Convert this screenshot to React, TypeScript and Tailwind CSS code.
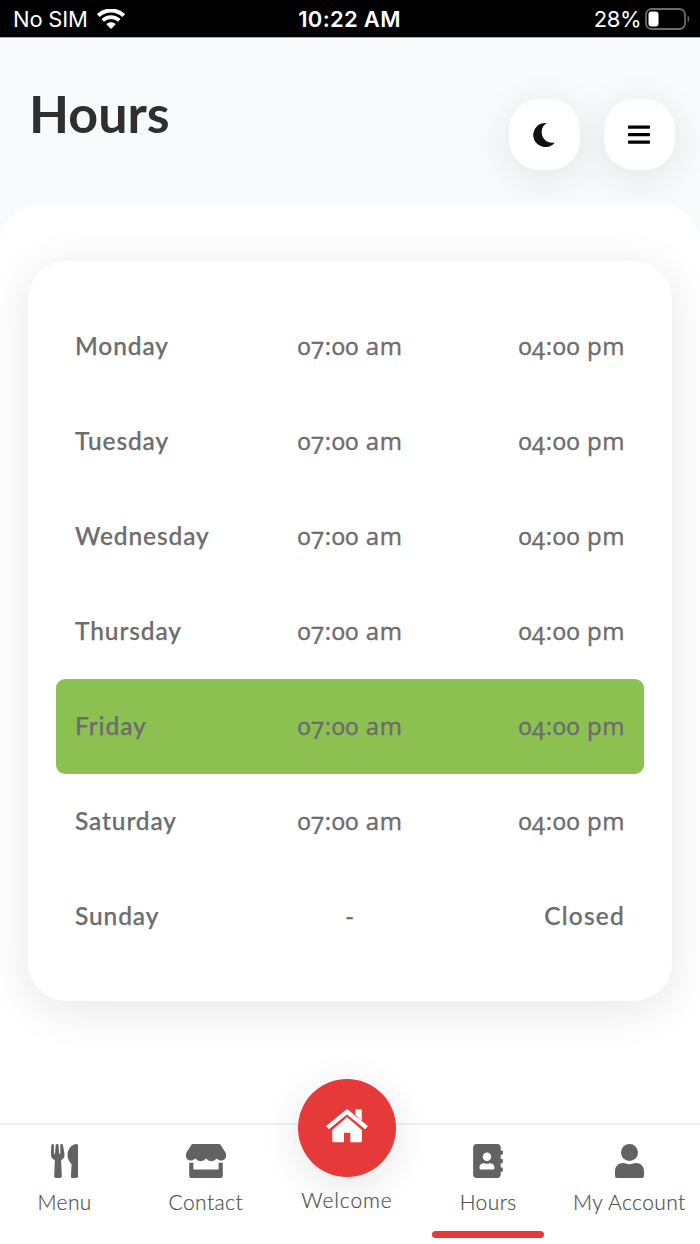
import clsx from 'clsx'
import type { ReactNode } from 'react'
import { FaAddressBook } from 'react-icons/fa'

interface DayHours {
  day: string
  open: string
  close: string
  today?: boolean
}

const HOURS: DayHours[] = [
  { day: 'Monday', open: '07:00 am', close: '04:00 pm' },
  { day: 'Tuesday', open: '07:00 am', close: '04:00 pm' },
  { day: 'Wednesday', open: '07:00 am', close: '04:00 pm' },
  { day: 'Thursday', open: '07:00 am', close: '04:00 pm' },
  { day: 'Friday', open: '07:00 am', close: '04:00 pm', today: true },
  { day: 'Saturday', open: '07:00 am', close: '04:00 pm' },
  { day: 'Sunday', open: '-', close: 'Closed' },
]

function UtensilsIcon() {
  return (
    <svg className="h-[34px] w-[27px]" viewBox="0 0 27 34" fill="#626262">
      <path d="M.5.8C.7-.2 2.800-.2 2.900.9V9.500c.1.600 1 .600 1.100 0L4.700.8c.2-1 2.700-1 2.800 0l.7 8.700c.1.600 1 .600 1.100 0V.9c.1-1.100 2.300-1.100 2.500-.1C12 2 13.500 8.500 13.500 11c0 2.300-1.300 4.200-3.400 5.100l.7 15.900A1.900 1.900 0 0 1 8.900 34H5.100a1.900 1.900 0 0 1-1.900-2l.7-15.900C1.500 15.200 0 13.300 0 11 0 8.500.3 2 .5.8Z" />
      <path d="M20.600 20C18.500 18.300 16.500 15 16.500 11 16.500 5 21 0 25.300 0A1.600 1.600 0 0 1 27 1.600V32.200A1.700 1.700 0 0 1 25.300 34H21.600A1.700 1.700 0 0 1 19.900 32.100Z" />
    </svg>
  )
}

function StoreIcon() {
  return (
    <svg className="h-[34px] w-[40px]" viewBox="0 0 40 34" fill="#626262">
      <path d="M7 0h26a2 2 0 0 1 1.700 1l4.600 7.300c2.200 3.600.3 8-4 8.300-1.900 0-3.400-.8-4.700-2.100a6.600 6.600 0 0 1-10.600 0 6.600 6.600 0 0 1-10.600 0C8 15.800 6.600 16.600 4.700 16.600.4 16.300-1.500 11.900.7 8.300L5.300 1A2 2 0 0 1 7 0Z" />
      <path d="M3.200 18.700h4.200V25.500h25.200V18.700h4.200V32a2 2 0 0 1-2 2H5.200a2 2 0 0 1-2-2Z" />
    </svg>
  )
}

function HomeIcon() {
  return (
    <svg className="mb-[4px] h-[34px] w-[42px]" viewBox="0 0 42 34" fill="white">
      <path d="M29.500 6V1.300A1 1 0 0 1 30.500.3H34.800A1 1 0 0 1 35.800 1.300V11.700Z" />
      <path d="M1.500 18.600 21 2.600 40.500 18.600" fill="none" stroke="white" strokeWidth="4.400" strokeLinejoin="round" />
      <path d="M21 8.300 36 21V32A1.300 1.300 0 0 1 34.700 33.300H24.300V23.700H18V33.300H7.600A1.300 1.300 0 0 1 6.300 32V21Z" />
    </svg>
  )
}

function UserIcon() {
  return (
    <svg className="h-[34px] w-[29px]" viewBox="0 0 29 34" fill="#626262">
      <circle cx="14.500" cy="8.500" r="8.500" />
      <path d="M8 19C10.500 19 11.500 20.200 14.500 20.200S18.500 19 21 19C25.500 19 29 22.500 29 27V31.800A2.200 2.200 0 0 1 26.800 34H2.200A2.200 2.200 0 0 1 0 31.800V27C0 22.500 3.500 19 8 19Z" />
    </svg>
  )
}

function StatusBar() {
  return (
    <div className="grid h-[37px] grid-cols-3 items-center bg-black pl-[13px] pr-[10px] pt-[2px] font-['Inter',sans-serif] text-[22px] text-white">
      <div className="flex items-center gap-[9px] whitespace-nowrap">
        <span className="tracking-[-0.2px]">No SIM</span>
        <svg className="h-[21px] w-[28px]" viewBox="0 0 28 21" fill="none">
          <path d="M1.3 6.6C8.4-.2 19.6-.2 26.7 6.6" stroke="white" strokeWidth="4" />
          <path d="M5.7 11.4c4.7-4.4 11.9-4.4 16.6 0" stroke="white" strokeWidth="3.6" />
          <path d="M9.3 15.2c2.7-2.5 6.7-2.5 9.4 0L14 20z" fill="white" />
        </svg>
      </div>
      <span className="-ml-[4px] text-center font-semibold tracking-[0.3px]">10:22 AM</span>
      <div className="flex items-center justify-end gap-[4px]">
        <span className="tracking-[-0.5px]">28%</span>
        <svg className="-mt-[2px] h-[22px] w-[45px]" viewBox="0 0 45 22" fill="none">
          <rect x="1" y="1" width="39" height="20" rx="5.5" stroke="#6b6b6b" strokeWidth="1.8" />
          <rect x="3.5" y="3.5" width="10" height="15" rx="3" fill="white" />
          <path d="M42.6 7.5c2 1.3 2 5.7 0 7z" fill="#6b6b6b" />
        </svg>
      </div>
    </div>
  )
}

function RoundButton({ label, children }: { label: string; children: ReactNode }) {
  return (
    <button
      type="button"
      aria-label={label}
      className="flex size-[71px] items-center justify-center rounded-[30px] bg-white pr-[2px] shadow-[0_8px_40px_rgba(0,0,0,0.09)]"
    >
      {children}
    </button>
  )
}

function HoursRow({ day, open, close, today }: DayHours) {
  const wordClass = 'pt-[2px] text-[24.5px] [-webkit-text-stroke:0.25px_#6c6c6c]'
  const timeClass =
    "font-['Open_Sans',sans-serif] tracking-[0.6px] [-webkit-text-stroke:0.4px_#6c6c6c]"

  return (
    <div
      className={clsx(
        'grid h-[95px] grid-cols-3 items-center rounded-[9px] pb-[2px] pl-[19px] pr-[20px]',
        today && 'bg-[#8cc152]',
      )}
    >
      <span className={clsx('tracking-[0.9px]', wordClass)}>{day}</span>
      <span className={clsx('pl-px text-center', timeClass)}>{open}</span>
      <span
        className={clsx(
          '-mr-px text-right',
          close === 'Closed' ? ['tracking-[1.2px]', wordClass] : timeClass,
        )}
      >
        {close}
      </span>
    </div>
  )
}

function NavItem({ icon, label, active }: { icon: ReactNode; label: string; active?: boolean }) {
  return (
    <a className="relative flex h-full flex-col items-center pt-[19px]">
      <span className="flex h-[34px] items-center">{icon}</span>
      <span className="mt-[9px] whitespace-nowrap tracking-[0.4px]">{label}</span>
      {active && <span className="absolute bottom-[6px] h-[7px] w-[112px] rounded-full bg-[#e63939]" />}
    </a>
  )
}

export default function App() {
  return (
    <div className="flex h-[1244px] w-[700px] flex-col overflow-hidden bg-[#f7fbfc] font-['Lato',sans-serif]">
      <StatusBar />

      <header className="flex h-[168px] shrink-0 items-start justify-between border-t border-[#a9acad] pl-[29px] pr-[25px]">
        <h1 className="mt-[43px] text-[52px] font-bold leading-[64px] text-[#2f2f2f]">Hours</h1>
        <div className="mt-[61px] flex gap-[24px]">
          <RoundButton label="Dark mode">
            <svg className="size-[26px]" viewBox="0 0 26 26" fill="#0e1013">
              <path d="M15.8 1A12.1 12.1 0 1 0 23.9 20.4C17.6 22.2 11.2 17.7 10.7 11 10.4 6.6 12.3 3 15.8 1Z" />
            </svg>
          </RoundButton>
          <RoundButton label="Open menu">
            <svg className="h-[20px] w-[22px]" viewBox="0 0 22 20" fill="black">
              <rect width="22" height="3.300" y="0.500" rx="0.7" />
              <rect width="22" height="3.300" y="8" rx="0.7" />
              <rect width="22" height="3.300" y="15.500" rx="0.7" />
            </svg>
          </RoundButton>
        </div>
      </header>

      <main className="flex-1 rounded-t-[38px] bg-white px-[28px] pt-[56px]">
        <section className="h-[740px] rounded-[38px] bg-white px-[28px] pt-[38px] text-[24px] font-medium text-[#6c6c6c] shadow-[0_8px_45px_rgba(0,0,0,0.1)] [font-feature-settings:'onum']">
          {HOURS.map((row) => (
            <HoursRow key={row.day} {...row} />
          ))}
        </section>
      </main>

      <nav className="-ml-[6px] grid h-[121px] w-[706px] shrink-0 grid-cols-5 border-t-2 border-[#efefef] bg-white text-[21px] font-light leading-[30px] text-[#505050] [-webkit-text-stroke:0.2px_#505050]">
        <NavItem label="Menu" icon={<UtensilsIcon />} />
        <NavItem label="Contact" icon={<StoreIcon />} />
        <a className="flex flex-col items-center">
          <span className="-mt-[46px] flex size-[98px] shrink-0 items-center justify-center rounded-full bg-[#e63939] shadow-[0_8px_40px_rgba(0,0,0,0.1)]">
            <HomeIcon />
          </span>
          <span className="mt-[8px] tracking-[0.9px]">Welcome</span>
        </a>
        <NavItem label="Hours" icon={<FaAddressBook className="size-[34px] text-[#626262]" />} active />
        <NavItem label="My Account" icon={<UserIcon />} />
      </nav>
    </div>
  )
}
